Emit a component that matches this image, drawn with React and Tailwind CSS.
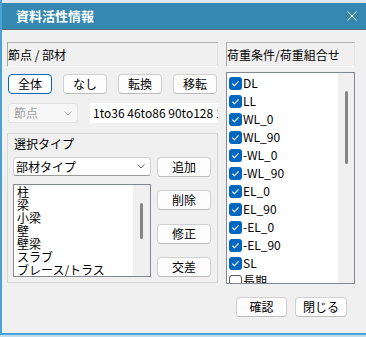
import React from "react";

const Chevron = ({ color = "#606060" }) => (
  <svg width="8" height="5" viewBox="0 0 8 5" fill="none">
    <path d="M0.5 0.5 L4 4 L7.5 0.5" stroke={color} strokeWidth="1" />
  </svg>
);

const Btn = ({ children, className = "", focused = false }) => (
  <div
    className={
      "h-[20px] flex items-center justify-center rounded-[4px] border bg-[#fdfdfd] text-[12px] leading-[14px] " +
      (focused ? "border-[#0067c0] " : "border-[#d0d0d0] border-b-[#bcbcbc] ") +
      className
    }
  >
    {children}
  </div>
);

const Check = ({ checked, label }) => (
  <div className="h-[18px] flex items-center">
    {checked ? (
      <div className="ml-[2px] w-[13px] h-[13px] rounded-[3px] bg-[#0067c0] flex items-center justify-center">
        <svg width="13" height="13" viewBox="0 0 13 13" fill="none">
          <path d="M3.3 6.6 L5.4 8.7 L9.6 4.4" stroke="#ffffff" strokeWidth="1.1" />
        </svg>
      </div>
    ) : (
      <div className="ml-[2px] w-[13px] h-[13px] rounded-[3px] border border-[#5a5a5a] bg-white" />
    )}
    <span className="ml-[1px] text-[12px] leading-[14px]">{label}</span>
  </div>
);

export default function App() {
  const loads = [
    ["DL", true],
    ["LL", true],
    ["WL_0", true],
    ["WL_90", true],
    ["-WL_0", true],
    ["-WL_90", true],
    ["EL_0", true],
    ["EL_90", true],
    ["-EL_0", true],
    ["-EL_90", true],
    ["SL", true],
    ["長期", false],
  ];
  const types = ["柱", "梁", "小梁", "壁", "壁梁", "スラブ", "ブレース/トラス"];

  return (
    <div className="w-[366px] h-[337px] overflow-hidden bg-[#bfdff0] font-['Noto_Sans_CJK_JP',sans-serif] text-[12px] text-black">
      <div className="h-[335px] flex flex-col border-l-2 border-b-2 border-[#4aa3d6] bg-[#f0f0f0]">
        <div className="h-[3px] bg-[#dfe9ef]" />
        <div className="h-[27px] flex items-center bg-[#3488b1] border-b border-[#5a6c76]">
          <span className="ml-[14px] text-white font-bold text-[13px] leading-[16px]">資料活性情報</span>
          <svg className="ml-auto mr-[9px]" width="10" height="10" viewBox="0 0 10 10" fill="none">
            <path d="M0.5 0.5 L9.5 9.5 M9.5 0.5 L0.5 9.5" stroke="#ffffff" strokeWidth="1" />
          </svg>
        </div>

        <div className="flex-1 flex pt-[12px] pl-[5px]">
          {/* left column */}
          <div className="w-[211px] flex flex-col">
            <div className="h-[25px] flex items-center border border-t-[#b4b4b4] border-l-[#a8a8a8] border-b-white border-r-[#e4e4e4]">
              <span className="leading-[16px]">節点 / 部材</span>
            </div>

            <div className="mt-[7px] px-px flex justify-between">
              <Btn focused className="w-[44px]">全体</Btn>
              <Btn className="w-[44px]">なし</Btn>
              <Btn className="w-[44px]">転換</Btn>
              <Btn className="w-[44px]">移転</Btn>
            </div>

            <div className="mt-[9px] h-[20px] flex">
              <div className="ml-px w-[70px] h-[20px] flex items-center justify-between rounded-[3px] border border-[#e3e3e3] bg-[#f6f6f6] pl-[5px] pr-[5px]">
                <span className="text-[#a0a0a0] leading-[14px]">節点</span>
                <Chevron color="#b0b0b0" />
              </div>
              <div className="ml-[12px] flex-1 h-[20px] bg-white flex items-center pl-[3px] overflow-hidden whitespace-nowrap">
                <span className="leading-[14px]">1to36 46to86 90to128 130to168</span>
              </div>
            </div>

            <div className="mt-[10px] h-[150px] border border-[#d6d6d6] flex flex-col pl-[5px] pt-[2px]">
              <div className="pl-px leading-[16px]">選択タイプ</div>
              <div className="mt-[5px] flex">
                <div className="w-[138px] flex flex-col">
                  <div className="h-[19px] flex items-center justify-between rounded-[3px] border border-[#d0d0d0] border-b-[#9a9a9a] bg-white pl-[2px] pr-[5px]">
                    <span className="leading-[14px]">部材タイプ</span>
                    <Chevron />
                  </div>
                  <div className="mt-[8px] h-[93px] border border-[#828790] bg-white flex overflow-hidden">
                    <div className="flex-1 pl-[3px]">
                      {types.map((t) => (
                        <div key={t} className="leading-[13px] whitespace-nowrap">{t}</div>
                      ))}
                    </div>
                    <div className="w-[17px] bg-[#f0f0f0] flex justify-center pt-[18px]">
                      <div className="w-[3px] h-[36px] rounded-full bg-[#858585]" />
                    </div>
                  </div>
                </div>
                <div className="ml-[6px] w-[54px] flex flex-col">
                  <Btn>追加</Btn>
                  <Btn className="mt-[13px]">削除</Btn>
                  <Btn className="mt-[14px]">修正</Btn>
                  <Btn className="mt-[13px]">交差</Btn>
                </div>
              </div>
            </div>
          </div>

          {/* right column */}
          <div className="ml-[8px] w-[129px] flex flex-col">
            <div className="h-[25px] flex items-center border border-t-[#b4b4b4] border-l-[#a8a8a8] border-b-white border-r-[#e4e4e4]">
              <span className="leading-[16px] whitespace-nowrap">荷重条件/荷重組合せ</span>
            </div>
            <div className="mt-[5px] h-[212px] border border-[#828790] bg-white flex overflow-hidden">
              <div className="flex-1 pt-[1px]">
                {loads.map(([l, c]) => (
                  <Check key={l} checked={c} label={l} />
                ))}
              </div>
              <div className="w-[16px] bg-[#f0f0f0] flex justify-center pt-[18px]">
                <div className="w-[3px] h-[73px] rounded-full bg-[#858585]" />
              </div>
            </div>
            <div className="mt-[13px] flex">
              <Btn className="ml-[10px] w-[51px]">確認</Btn>
              <Btn className="ml-[8px] w-[52px]">閉じる</Btn>
            </div>
          </div>
        </div>
      </div>
    </div>
  );
}
